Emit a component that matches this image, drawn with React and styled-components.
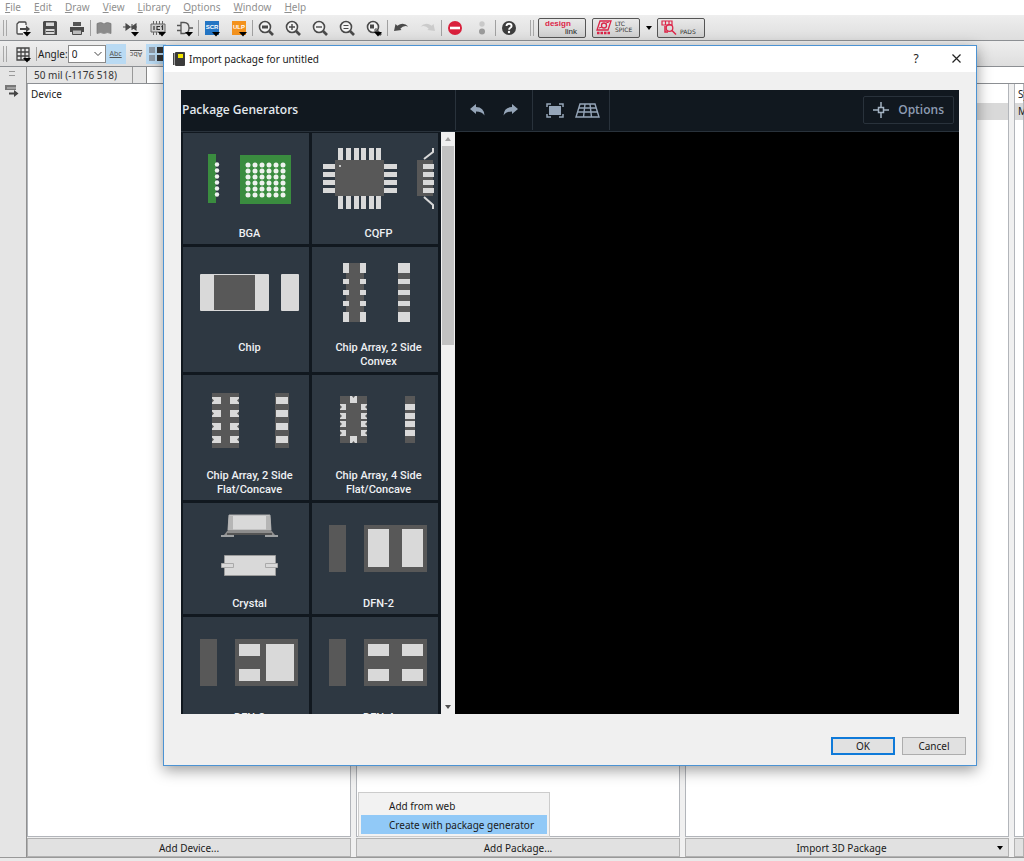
import React, { useState } from 'react';
import styled, { createGlobalStyle, css } from 'styled-components';

const MENUS = ['File', 'Edit', 'Draw', 'View', 'Library', 'Options', 'Window', 'Help'];

const Caret = () => <path d="M10 14h8l-4 4.500z" fill="#000" />;

const Lens = ({ children }) => (
  <>
    <circle cx="9" cy="9" r="5.500" fill="#f4f4f4" stroke="#4a4a4a" strokeWidth="1.600" />
    <path d="M13 13l4 4" stroke="#4a4a4a" strokeWidth="2.600" />
    {children}
  </>
);

const TOOLS = [
  {
    name: 'Open',
    icon: (
      <>
        <path d="M13 7V5q0-1-1-1H6L4 6v9q0 1 1 1h5" fill="#f6f6f6" stroke="#4a4a4a" strokeWidth="1.300" />
        <path d="M7 10h6V7.500l4 3.500-4 3.500V12H7z" fill="#4a4a4a" />
        <Caret />
      </>
    ),
  },
  {
    name: 'Save',
    icon: (
      <>
        <path d="M4 3h12l1 1v13H3V4z" fill="#4a4a4a" />
        <path d="M6 4.500h8V8H6zM5.500 11h9v5h-9z" fill="#d8d8d8" />
        <path d="M6 13.500h8" stroke="#4a4a4a" />
      </>
    ),
  },
  {
    name: 'Print',
    icon: (
      <>
        <path d="M6 4h8v4H6z" fill="#555" />
        <path d="M3 9h14v5H3z" fill="#4a4a4a" />
        <path d="M5.500 12h9v4.500h-9z" fill="#bbb" stroke="#4a4a4a" />
      </>
    ),
  },
  {
    name: 'Library',
    divided: true,
    icon: (
      <path
        d="M3 5.500q4-1.800 6.500 0v10q-2.500-1.800-6.500 0zM17 5.500q-4-1.800-6.500 0v10q2.500-1.800 6.500 0z"
        fill="#8b8b8b"
        stroke="#777"
        strokeWidth=".7"
      />
    ),
  },
  {
    name: 'Add part',
    icon: (
      <>
        <path d="M2 9h3M8 9h3M5 6l4 3-4 3zM11 6v6M11 9h5M15 6l-4 3 4 3z" fill="#4a4a4a" stroke="#4a4a4a" strokeWidth="1.100" />
        <Caret />
      </>
    ),
  },
  {
    name: 'Board',
    icon: (
      <>
        <path d="M5.500 3v14M8.500 3v14M11.500 3v14M14.500 3v14" stroke="#666" />
        <path d="M3 6h14v8H3z" fill="#cfcfcf" stroke="#666" />
        <path d="M6 8v4M12 8.500H9v3h3M13.500 9l1-1v4" fill="none" stroke="#333" strokeWidth="1.200" />
        <Caret />
      </>
    ),
  },
  {
    name: 'Schematic',
    icon: (
      <>
        <path d="M2 7.500h4M2 12.500h4M6 4.500h3q5 0 5 5.500t-5 5.500H6zM14 10h4" fill="none" stroke="#555" strokeWidth="1.300" />
        <Caret />
      </>
    ),
  },
  { name: 'Script', divided: true, tag: 'SCR', color: '#2475c4' },
  { name: 'ULP', tag: 'ULP', color: '#f3921e' },
  { name: 'Fit', divided: true, icon: <Lens><path d="M6 7.500h6v3H6z" fill="#4a4a4a" /></Lens> },
  { name: 'Zoom in', icon: <Lens><path d="M6 9h6M9 6v6" stroke="#4a4a4a" strokeWidth="1.400" /></Lens> },
  { name: 'Zoom out', icon: <Lens><path d="M6 9h6" stroke="#4a4a4a" strokeWidth="1.400" /></Lens> },
  { name: 'Redraw', icon: <Lens><path d="M6.500 7.500h5M6.500 10.500h5" stroke="#4a4a4a" strokeWidth="1.200" /></Lens> },
  {
    name: 'Select area',
    icon: (
      <>
        <Lens>
          <path d="M6 6.500h4v4H6z" fill="#4a4a4a" />
          <path d="M10 12h2v-2" fill="none" stroke="#4a4a4a" />
        </Lens>
        <Caret />
      </>
    ),
  },
  {
    name: 'Undo',
    divided: true,
    icon: <path d="M3 13l1.500-7 1.800 1.800q6-4.500 11 .7-5-1.500-8 2.200L10.500 12z" fill="#4a4a4a" />,
  },
  {
    name: 'Redo',
    icon: <path d="M17 13l-1.500-7-1.800 1.800q-6-4.500-11 .7 5-1.500 8 2.200L9.500 12z" fill="#cbcbcb" />,
  },
  {
    name: 'Stop',
    divided: true,
    icon: (
      <>
        <circle cx="10" cy="10" r="7" fill="#d9203c" />
        <path d="M5 8.700h10v2.600H5z" fill="#fff" />
      </>
    ),
  },
  {
    name: 'Go',
    icon: (
      <>
        <circle cx="10" cy="6" r="2.700" fill="#c9c9c9" />
        <circle cx="10" cy="13.500" r="3" fill="#9a9a9a" />
      </>
    ),
  },
  {
    name: 'Help',
    divided: true,
    icon: (
      <>
        <circle cx="10" cy="10" r="7" fill="#3d3d3d" />
        <path d="M7.500 8q.2-2.300 2.600-2.300T12.600 8q0 1.200-1.500 2-1 .6-1 1.800" fill="none" stroke="#fff" strokeWidth="1.900" />
        <circle cx="10" cy="14" r="1.200" fill="#fff" />
      </>
    ),
  },
];

// package drawings, all on a 126 x 94 canvas
const BODY = '#585858';
const PAD = '#d9d9d9';

const Rects = ({ list, fill = PAD }) =>
  list.map(([x, y, w, h]) => <rect key={`${x}-${y}`} x={x} y={y} width={w} height={h} fill={fill} />);

const Bga = () => (
  <>
    <Rects fill="#3a8c3f" list={[[25, 21, 8, 49], [57, 22, 51, 49]]} />
    {[32, 38, 44, 50, 56, 62].map((y) => (
      <g key={y} fill="#eef2ee">
        <circle cx="34" cy={y - 0.5} r="2.200" />
        {[65, 72, 79, 86, 93, 100].map((x) => (
          <circle key={x} cx={x} cy={y} r="2.500" />
        ))}
      </g>
    ))}
  </>
);

const Cqfp = () => (
  <>
    <Rects fill={BODY} list={[[23, 27, 49, 36], [105, 27, 16, 36]]} />
    {[26, 34, 42, 49, 57, 64].map((x) => (
      <Rects key={x} list={[[x, 15, 5, 12], [x, 63, 5, 13]]} />
    ))}
    {[31, 39, 47, 55].map((y) => (
      <Rects key={y} list={[[11, y, 12, 5], [72, y, 13, 5], [111, y, 11, 5]]} />
    ))}
    <path d="M112 26l9-7v-4M112 64l9 8v4" fill="none" stroke={PAD} strokeWidth="2" />
    <circle cx="28" cy="33" r="1" fill="#eee" />
  </>
);

const Chip = () => (
  <>
    <rect x="17" y="27" width="69" height="37" rx="1" fill={PAD} />
    <rect x="31" y="28" width="41" height="35" fill={BODY} />
    <rect x="98" y="27" width="18" height="37" rx="1" fill={PAD} />
  </>
);

const Convex = () => (
  <>
    <Rects fill={BODY} list={[[34, 16, 18, 59], [86, 16, 12, 59]]} />
    {[[16, 10], [32, 5], [43, 5], [54, 5], [65, 10]].map(([y, h]) => (
      <Rects key={y} list={[[31, y, 6, h], [48, y, 6, h], [86, y, 12, h]]} />
    ))}
  </>
);

const Concave2 = () => (
  <>
    <Rects fill={BODY} list={[[29, 18, 27, 55], [92, 18, 14, 55]]} />
    {[22, 35, 48, 61].map((y) => (
      <g key={y} fill={PAD}>
        <path d={`M29 ${y}h9v7h-9v-1.500l2-2-2-2zM56 ${y}h-9v7h9v-1.500l-2-2 2-2z`} />
        <rect x="93" y={y} width="12" height="7" />
      </g>
    ))}
  </>
);

const Concave4 = () => (
  <>
    <Rects fill={BODY} list={[[28, 21, 27, 47], [93, 21, 10, 47]]} />
    {[29, 38, 46, 55].map((y) => (
      <g key={y} fill={PAD}>
        <path d={`M28 ${y}h6v6h-6v-1l2-2-2-2zM55 ${y}h-6v6h6v-1l-2-2 2-2z`} />
        <rect x="93" y={y} width="10" height="6" />
      </g>
    ))}
    <path d="M38 21v7h7v-7h-2l-1.500 2L40 21zM38 68v-7h7v7h-2l-1.500-2L40 68z" fill={PAD} />
  </>
);

const Crystal = () => (
  <>
    <path d="M46 12h41l1 15H45z" fill={PAD} stroke="#aaa" />
    <path d="M46 13h4v14h-5zM83 13h4l1 14h-5z" fill="#b5b5b5" />
    <path d="M45 27h43l4 5H41z" fill="#8d8d8d" />
    <path d="M38 33h13M82 33h13" stroke="#c4c4c4" strokeWidth="1.500" />
    <path d="M44 31h45" stroke="#555" strokeWidth="2" />
    <path d="M41.500 52.500h51v20h-51z" fill={PAD} stroke="#9b9b9b" />
    <path d="M38.500 60.500h12v4h-12zM82.500 60.500h12v4h-12z" fill={PAD} stroke="#aaa" />
  </>
);

const Dfn = ({ pads }) => (
  <>
    <Rects fill={BODY} list={[[17, 22, 17, 47], [52, 22, 63, 47]]} />
    <Rects list={pads} />
  </>
);

const PACKAGES = [
  { label: 'BGA', art: <Bga /> },
  { label: 'CQFP', art: <Cqfp /> },
  { label: 'Chip', art: <Chip /> },
  { label: 'Chip Array, 2 Side Convex', art: <Convex /> },
  { label: 'Chip Array, 2 Side Flat/Concave', art: <Concave2 /> },
  { label: 'Chip Array, 4 Side Flat/Concave', art: <Concave4 /> },
  { label: 'Crystal', art: <Crystal /> },
  { label: 'DFN-2', art: <Dfn pads={[[56, 26, 21, 38], [90, 26, 21, 38]]} /> },
  { label: 'DFN-3', art: <Dfn pads={[[56, 27, 21, 12], [56, 52, 21, 12], [83, 27, 28, 37]]} /> },
  { label: 'DFN-4', art: <Dfn pads={[[56, 27, 21, 12], [56, 52, 21, 12], [90, 27, 21, 12], [90, 52, 21, 12]]} /> },
];

const MainToolbar = () => (
  <Toolbar>
    <Grip />
    {TOOLS.map(({ name, icon, divided, tag, color }) => (
      <Tool key={name} type="button" aria-label={name} $divided={divided}>
        {tag && <Tag $color={color}>{tag}</Tag>}
        <Icon viewBox="0 0 20 20">{tag ? <Caret /> : icon}</Icon>
      </Tool>
    ))}
    <Vendors>
      <Grip />
      <Vendor type="button">
        <DesignLink>
          design<b>link</b>
        </DesignLink>
      </Vendor>
      <Vendor type="button">
        <svg width="16" height="15" viewBox="0 0 16 15" fill="none" stroke="#dc2548">
          <path d="M4 1h11l-3 9H1z" strokeWidth="1.300" />
          <circle cx="8" cy="5.500" r="2.500" strokeWidth="1.300" />
          <path d="M10 3l3-1M3 8l3-1" />
          <path d="M1 13h13" strokeWidth="2.500" strokeDasharray="2.500 1" />
        </svg>
        <VendorName>
          LTC
          <br />
          SPICE
        </VendorName>
      </Vendor>
      <DropButton type="button" aria-label="LTSpice options">
        <Triangle />
      </DropButton>
      <Vendor type="button">
        <svg width="16" height="15" viewBox="0 0 16 15" fill="none" stroke="#dc2548">
          <path d="M1 1h10v4H1zM4.500 1v4M8 1v4" strokeWidth="1.200" />
          <circle cx="8.500" cy="8" r="3.300" strokeWidth="1.300" />
          <path d="M11 10.500l4 4M4 6v6h3" strokeWidth="1.500" />
        </svg>
        <VendorName $low>PADS</VendorName>
      </Vendor>
    </Vendors>
  </Toolbar>
);

const AngleToolbar = () => {
  const [angle, setAngle] = useState('0');
  return (
    <Toolbar>
      <Grip />
      <Tool type="button" aria-label="Grid">
        <Icon viewBox="0 0 20 20">
          <path d="M4 4h12v12H4zM8 4v12M12 4v12M4 8h12M4 12h12" fill="none" stroke="#444" strokeWidth="1.300" />
          <Caret />
        </Icon>
      </Tool>
      <AngleLabel htmlFor="angle">Angle:</AngleLabel>
      <SelectWrap>
        <AngleSelect id="angle" value={angle} onChange={(e) => setAngle(e.target.value)}>
          {['0', '90', '180', '270'].map((a) => (
            <option key={a}>{a}</option>
          ))}
        </AngleSelect>
        <svg width="8" height="6" viewBox="0 0 8 6">
          <path d="M.5 1L4 4.500 7.500 1" fill="none" stroke="#444" />
        </svg>
      </SelectWrap>
      <Toggle type="button" $on>
        Abc
      </Toggle>
      <Toggle type="button" aria-label="Upside down text">
        <Flipped>Abc</Flipped>
      </Toggle>
      <Toggle type="button" $on aria-label="Layers">
        <svg width="14" height="14" viewBox="0 0 14 14">
          <path d="M0 0h6v6H0zM0 8h6v6H0z" fill="#8d99a6" />
          <path d="M8 0h6v6H8zM8 8h6v6H8z" fill="#333" />
        </svg>
      </Toggle>
    </Toolbar>
  );
};

const ImportDialog = () => (
  <Dialog role="dialog" aria-label="Import package for untitled">
    <TitleBar>
      <svg width="12" height="14" viewBox="0 0 12 14">
        <path d="M0 1h1.500v12H0z" fill="#444" />
        <rect x="2" width="10" height="14" rx="1" fill="#3b3b3b" />
        <path d="M5 2h5v4H5z" fill="#f2e600" />
      </svg>
      <Title>Import package for untitled</Title>
      <TitleButton type="button">?</TitleButton>
      <TitleButton type="button" aria-label="Close">
        <svg width="9" height="9" viewBox="0 0 9 9">
          <path d="M.5.5l8 8M8.500.5l-8 8" stroke="#222" strokeWidth="1.200" />
        </svg>
      </TitleButton>
    </TitleBar>
    <Generator>
      <GeneratorBar>
        <GeneratorTitle>Package Generators</GeneratorTitle>
        <BarGroup>
          <BarButton type="button" aria-label="Undo">
            <svg width="15" height="12" viewBox="0 0 15 12">
              <path d="M0 5l6-5v3q8 0 8.500 8.500Q12 7.500 6 7.500V10z" fill="#95a5b8" />
            </svg>
          </BarButton>
          <BarButton type="button" aria-label="Redo">
            <svg width="15" height="12" viewBox="0 0 15 12">
              <path d="M15 5L9 0v3Q1 3 .5 11.500 3 7.500 9 7.500V10z" fill="#95a5b8" />
            </svg>
          </BarButton>
        </BarGroup>
        <BarGroup>
          <BarButton type="button" aria-label="Zoom to fit">
            <svg width="18" height="15" viewBox="0 0 18 15">
              <path d="M3 3h12v9H3z" fill="#95a5b8" />
              <path d="M1 4V1h4M13 1h4v3M17 11v3h-4M5 14H1v-3" fill="none" stroke="#95a5b8" strokeWidth="1.500" />
            </svg>
          </BarButton>
          <BarButton type="button" aria-label="Grid">
            <svg width="25" height="15" viewBox="0 0 25 15">
              <path
                d="M5 1h15l4 13H1zM4 5h17M3 9h19M10 1L8.500 14M15 1l1.500 13"
                fill="none"
                stroke="#95a5b8"
                strokeWidth="1.400"
              />
            </svg>
          </BarButton>
        </BarGroup>
        <OptionsButton type="button">
          <svg width="16" height="16" viewBox="0 0 16 16">
            <path d="M5.500 5.500h5v5h-5zM8 0v5M8 11v5M0 8h5M11 8h5" fill="none" stroke="#a3b2c2" strokeWidth="1.500" />
          </svg>
          Options
        </OptionsButton>
      </GeneratorBar>
      <Workspace>
        <PackageList>
          {PACKAGES.map(({ label, art }) => (
            <Tile key={label} type="button">
              <svg width="126" height="94" viewBox="0 0 126 94">
                {art}
              </svg>
              <TileLabel>{label}</TileLabel>
            </Tile>
          ))}
        </PackageList>
        <ScrollTrack>
          <Triangle $up $color="#a0a0a0" />
          <ScrollRail>
            <Thumb />
          </ScrollRail>
          <Triangle $color="#505050" />
        </ScrollTrack>
        <Viewport />
      </Workspace>
    </Generator>
    <DialogFooter>
      <DialogButton type="button" $primary>
        OK
      </DialogButton>
      <DialogButton type="button">Cancel</DialogButton>
    </DialogFooter>
  </Dialog>
);

export default function App() {
  return (
    <>
      <GlobalStyle />
      <Window>
        <MenuBar>
          {MENUS.map((m) => (
            <MenuItem key={m} type="button">
              <u>{m[0]}</u>
              {m.slice(1)}
            </MenuItem>
          ))}
        </MenuBar>
        <MainToolbar />
        <AngleToolbar />
        <Main>
          <SideBar>
            <svg width="6" height="5" viewBox="0 0 6 5">
              <path d="M0 .5h6M0 4.500h6" stroke="#999" />
            </svg>
            <SideButton type="button" aria-label="Edit">
              <svg width="14" height="13" viewBox="0 0 14 13">
                <path d="M0 1h11v5H0z" fill="#777" />
                <path d="M2 4h9" stroke="#ccc" />
                <path d="M4 8.500h5V6l4.500 3.500L9 13v-2.500H4z" fill="#444" />
              </svg>
            </SideButton>
          </SideBar>
          <Content>
            <CommandRow>
              <Coords>50 mil (-1176 518)</Coords>
              <CommandInput aria-label="Command" />
            </CommandRow>
            <Columns>
              <Column>
                <Pane>
                  <PaneRow>Device</PaneRow>
                </Pane>
                <AddButton type="button">Add Device...</AddButton>
              </Column>
              <Column>
                <Pane />
                <AddButton type="button">Add Package...</AddButton>
                <Popup role="menu">
                  <PopupItem type="button" role="menuitem">
                    Add from web
                  </PopupItem>
                  <PopupItem type="button" role="menuitem" $active>
                    Create with package generator
                  </PopupItem>
                </Popup>
              </Column>
              <Column>
                <Pane>
                  <PaneRow />
                  <PaneRow $selected />
                </Pane>
                <AddButton type="button">
                  <span>Import 3D Package</span>
                  <Triangle />
                </AddButton>
              </Column>
              <Column>
                <Pane>
                  <PaneRow>Sy</PaneRow>
                  <PaneRow $selected>M</PaneRow>
                </Pane>
                <AddButton type="button" aria-label="Add Symbol" />
              </Column>
            </Columns>
          </Content>
        </Main>
        <StatusBar />
        <ImportDialog />
      </Window>
    </>
  );
}

const GlobalStyle = createGlobalStyle`
  * {
    box-sizing: border-box;
  }
  body {
    margin: 0;
    overflow: hidden;
    background: #f0f0f0;
    color: #1a1a1a;
    font: 10px/14px "Noto Sans", "Open Sans", sans-serif;
  }
  button, select, input {
    margin: 0;
    padding: 0;
    border: 0;
    background: none;
    color: inherit;
    font: inherit;
  }
  svg {
    display: block;
    flex: none;
  }
`;

const Window = styled.div`
  position: relative;
  display: flex;
  flex-direction: column;
  height: 100vh;
`;

const MenuBar = styled.nav`
  display: flex;
  gap: 13px;
  height: 15px;
  padding: 0 0 1px 5px;
  background: #fff;
`;

const MenuItem = styled.button`
  color: #8f8f8f;
`;

const Toolbar = styled.div`
  display: flex;
  align-items: center;
  height: 26px;
  padding-left: 3px;
  background: linear-gradient(#eeeeee, #dedede);
  border-bottom: 1px solid #8c8f93;
`;

const Grip = styled.span`
  width: 4px;
  height: 16px;
  margin-right: 2px;
  border: solid #a8a8a8;
  border-width: 0 1px;
`;

const Tool = styled.button`
  position: relative;
  display: flex;
  align-items: center;
  justify-content: center;
  width: 27px;
  height: 16px;
  border-left: 1px solid ${(p) => (p.$divided ? '#a0a0a0' : 'transparent')};
`;

const Icon = styled.svg`
  position: relative;
  width: 20px;
  height: 20px;
`;

const Tag = styled.span`
  position: absolute;
  left: 6px;
  top: 1px;
  width: 14px;
  height: 14px;
  background: ${(p) => p.$color};
  color: #fff;
  font: bold 6px/13px "Liberation Sans", sans-serif;
`;

const Vendors = styled.div`
  display: flex;
  align-items: center;
  margin-left: 8px;
`;

const Vendor = styled.button`
  display: flex;
  align-items: center;
  gap: 3px;
  width: 48px;
  height: 20px;
  margin-right: 6px;
  padding-left: 3px;
  background: linear-gradient(#e9e9e9, #cfcfcf);
  border: 1px solid #555;
  border-radius: 2px;

  ${Grip} + & {
    margin-left: 2px;
  }
`;

const VendorName = styled.span`
  align-self: ${(p) => (p.$low ? 'flex-end' : 'center')};
  color: #333;
  font: 6px/6px "DejaVu Sans", sans-serif;
  text-align: left;
  padding-bottom: ${(p) => (p.$low ? 2 : 1)}px;
`;

const DesignLink = styled.span`
  display: flex;
  flex-direction: column;
  padding: 0 3px 1px;
  color: #dc2548;
  font: bold 8px/8px "Liberation Sans", sans-serif;
  text-align: left;

  b {
    padding-left: 20px;
    color: #222;
    font-weight: normal;
    line-height: 7px;
  }
`;

const DropButton = styled.button`
  display: flex;
  align-items: center;
  justify-content: center;
  width: 6px;
  height: 20px;
  margin: 0 5px 0 0;
`;

const Triangle = styled.i`
  width: 0;
  height: 0;
  border: 3px solid transparent;
  ${(p) =>
    p.$up
      ? css`
          border-top: 0;
          border-bottom: 4px solid ${p.$color || '#000'};
        `
      : css`
          border-bottom: 0;
          border-top: 4px solid ${p.$color || '#000'};
        `}
`;

const AngleLabel = styled.label`
  padding-left: 1px;
  border-left: 1px solid #a0a0a0;
`;

const SelectWrap = styled.div`
  display: flex;
  align-items: center;
  width: 38px;
  height: 18px;
  padding-right: 3px;
  background: #fff;
  border: 1px solid #8a8a8a;

  svg {
    pointer-events: none;
    margin-left: -8px;
  }
`;

const AngleSelect = styled.select`
  flex: 1;
  height: 16px;
  padding-left: 3px;
  appearance: none;
  outline: none;
`;

const Toggle = styled.button`
  display: flex;
  align-items: center;
  justify-content: center;
  width: 20px;
  height: 20px;
  color: #555;
  font-size: 7px;
  line-height: 10px;
  text-decoration: underline;
  background: ${(p) => (p.$on ? '#b9daf3' : 'none')};
`;

const Flipped = styled.span`
  transform: rotate(180deg);
`;

const Main = styled.div`
  flex: 1;
  display: flex;
  min-height: 0;
`;

const SideBar = styled.aside`
  display: flex;
  flex-direction: column;
  align-items: center;
  gap: 8px;
  width: 27px;
  padding: 4px 3px 0 0;
  background: #e5e5e5;
  border-right: 1px solid #909090;
`;

const SideButton = styled.button`
  display: flex;
`;

const Content = styled.div`
  flex: 1;
  display: flex;
  flex-direction: column;
  min-width: 0;
`;

const CommandRow = styled.div`
  display: flex;
  height: 17px;
  background: #e6e6e6;
  border-bottom: 1px solid #8c8f93;
`;

const Coords = styled.div`
  width: 106px;
  margin-right: 13px;
  padding: 1px 0 0 7px;
  color: #333;
  border-right: 1px solid #999;
`;

const CommandInput = styled.input`
  flex: 1;
  background: #fff;
  border-left: 1px solid #888;
`;

const Columns = styled.div`
  flex: 1;
  display: grid;
  grid-template-columns: repeat(3, 1fr) 10px;
  gap: 5px;
  min-height: 0;
`;

const Column = styled.section`
  position: relative;
  display: flex;
  flex-direction: column;
  gap: 1px;
  min-width: 0;
  overflow: hidden;
`;

const Pane = styled.div`
  flex: 1;
  padding-top: 2px;
  background: #fff;
  border: 1px solid #b2b5ba;
  border-top: 0;
`;

const PaneRow = styled.div`
  height: 17px;
  padding-left: 3px;
  line-height: 17px;
  background: ${(p) => (p.$selected ? '#d9d9d9' : 'none')};
`;

const AddButton = styled.button`
  display: flex;
  align-items: center;
  justify-content: center;
  height: 19px;
  background: #e1e1e1;
  border: 1px solid #b2b2b2;

  i {
    margin-right: 5px;
  }
  span {
    flex: 1;
  }
`;

const Popup = styled.div`
  position: absolute;
  left: 2px;
  bottom: 20px;
  display: flex;
  flex-direction: column;
  width: 192px;
  padding: 3px 2px 2px;
  background: #f2f2f2;
  border: 1px solid #ccc;
`;

const PopupItem = styled.button`
  height: 19px;
  padding-left: 28px;
  text-align: left;
  background: ${(p) => (p.$active ? '#91c9f7' : 'none')};
`;

const StatusBar = styled.footer`
  height: 4px;
  background: #e9e9e9;
  border-top: 1px solid #999;
`;

const Dialog = styled.div`
  position: absolute;
  inset: 45px 47px 95px 163px;
  display: flex;
  flex-direction: column;
  background: #f0f0f0;
  border: 1px solid #4c93d3;
  box-shadow: 0 4px 14px rgba(0, 0, 0, 0.4);
`;

const TitleBar = styled.header`
  display: flex;
  align-items: center;
  height: 26px;
  padding: 0 0 1px 9px;
  background: #fff;
`;

const Title = styled.h1`
  flex: 1;
  margin: 0 0 0 4px;
  font-size: 10px;
  font-weight: normal;
`;

const TitleButton = styled.button`
  display: flex;
  align-items: center;
  justify-content: center;
  width: 40px;
  height: 25px;
  font-size: 12px;
`;

const Generator = styled.div`
  flex: 1;
  display: flex;
  flex-direction: column;
  min-height: 0;
  margin: 18px 17px 0;
  background: #11181f;
`;

const GeneratorBar = styled.div`
  display: flex;
  align-items: center;
  height: 42px;
  padding-bottom: 1px;
  border-bottom: 1px solid #29323b;
`;

const GeneratorTitle = styled.h2`
  width: 274px;
  margin: 0;
  padding-left: 1px;
  color: #e3e8ed;
  font: 600 12px/16px "Open Sans", sans-serif;
`;

const BarGroup = styled.div`
  display: flex;
  align-items: center;
  justify-content: center;
  gap: 3px;
  width: 77px;
  height: 40px;
  border-left: 1px solid #29323b;

  & + & {
    width: 78px;
    border-right: 1px solid #29323b;
  }
`;

const BarButton = styled.button`
  display: flex;
  align-items: center;
  justify-content: center;
  width: 30px;
  height: 28px;
`;

const OptionsButton = styled.button`
  display: flex;
  align-items: center;
  gap: 9px;
  height: 28px;
  margin: 0 5px 0 auto;
  padding: 0 9px;
  color: #8d9cb2;
  font: 600 12px/16px "Open Sans", sans-serif;
  border: 1px solid #29323b;
  border-radius: 2px;
`;

const Workspace = styled.div`
  flex: 1;
  display: flex;
  min-height: 0;
`;

const PackageList = styled.div`
  display: grid;
  grid-template-columns: 1fr 1fr;
  align-content: start;
  gap: 3px;
  width: 260px;
  padding: 1px 3px 0 2px;
  overflow: hidden;
`;

const Tile = styled.button`
  display: flex;
  flex-direction: column;
  align-items: center;
  padding-bottom: 3px;
  background: #2e3842;
`;

const TileLabel = styled.span`
  max-width: 110px;
  padding-left: 7px;
  color: #eef1f4;
  font: 500 11px/14px Roboto, sans-serif;
`;

const ScrollTrack = styled.div`
  display: flex;
  flex-direction: column;
  align-items: center;
  gap: 5px;
  width: 14px;
  padding: 5px 0;
  background: #f0f0f0;
`;

const ScrollRail = styled.div`
  flex: 1;
  align-self: stretch;
  padding: 0 1px;
`;

const Thumb = styled.div`
  height: 36%;
  background: #c1c1c1;
`;

const Viewport = styled.main`
  flex: 1;
  background: #000;
`;

const DialogFooter = styled.footer`
  display: flex;
  justify-content: flex-end;
  gap: 7px;
  padding: 23px 10px 10px;
`;

const DialogButton = styled.button`
  width: 64px;
  height: 18px;
  background: #e1e1e1;
  border: ${(p) => (p.$primary ? '2px solid #0f7ad9' : '1px solid #adadad')};
`;
